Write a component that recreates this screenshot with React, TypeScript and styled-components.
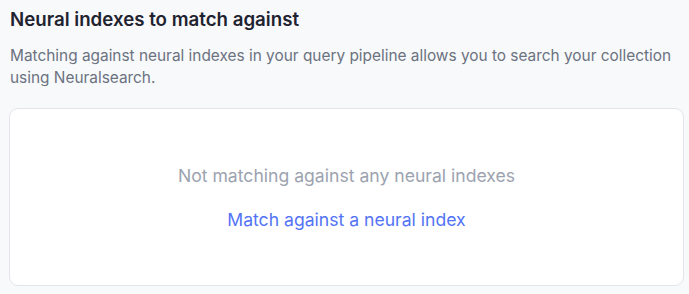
import React from 'react';
import styled, { createGlobalStyle } from 'styled-components';

const GlobalStyle = createGlobalStyle`
  html, body {
    margin: 0;
    padding: 0;
    background: #f8f9fb;
    font-family: Inter, "Noto Sans", sans-serif;
  }
`;

const App: React.FC = () => {
  return (
    <>
      <GlobalStyle />
      <Section>
        <Title>Neural indexes to match against</Title>
        <Description>
          Matching against neural indexes in your query pipeline allows you to search your collection
          using Neuralsearch.
        </Description>
        <EmptyCard>
          <EmptyText>Not matching against any neural indexes</EmptyText>
          <LinkButton type="button">Match against a neural index</LinkButton>
        </EmptyCard>
      </Section>
    </>
  );
};

const Section = styled.div`
  width: 689px;
  height: 294px;
  box-sizing: border-box;
  padding: 8px 5px 8px 9px;
  display: flex;
  flex-direction: column;
`;

const Title = styled.h2`
  margin: 0 0 0 1px;
  font-size: 18.7px;
  line-height: 24px;
  font-weight: 600;
  color: #1f2330;
`;

const Description = styled.p`
  margin: 13px 0 0 1px;
  font-size: 15.4px;
  line-height: 22px;
  color: #6b7280;
`;

const EmptyCard = styled.div`
  margin-top: 19px;
  flex: 1;
  background: #ffffff;
  border: 1px solid #e3e5ea;
  border-radius: 9px;
  display: flex;
  flex-direction: column;
  align-items: center;
  justify-content: center;
  gap: 20px;
  padding-top: 1px;
`;

const EmptyText = styled.div`
  font-size: 17.6px;
  line-height: 24px;
  color: #9ca3af;
`;

const LinkButton = styled.button`
  border: none;
  background: none;
  padding: 0;
  font-family: inherit;
  font-size: 17.6px;
  line-height: 24px;
  color: #5373f5;
  cursor: pointer;
`;

export default App;
